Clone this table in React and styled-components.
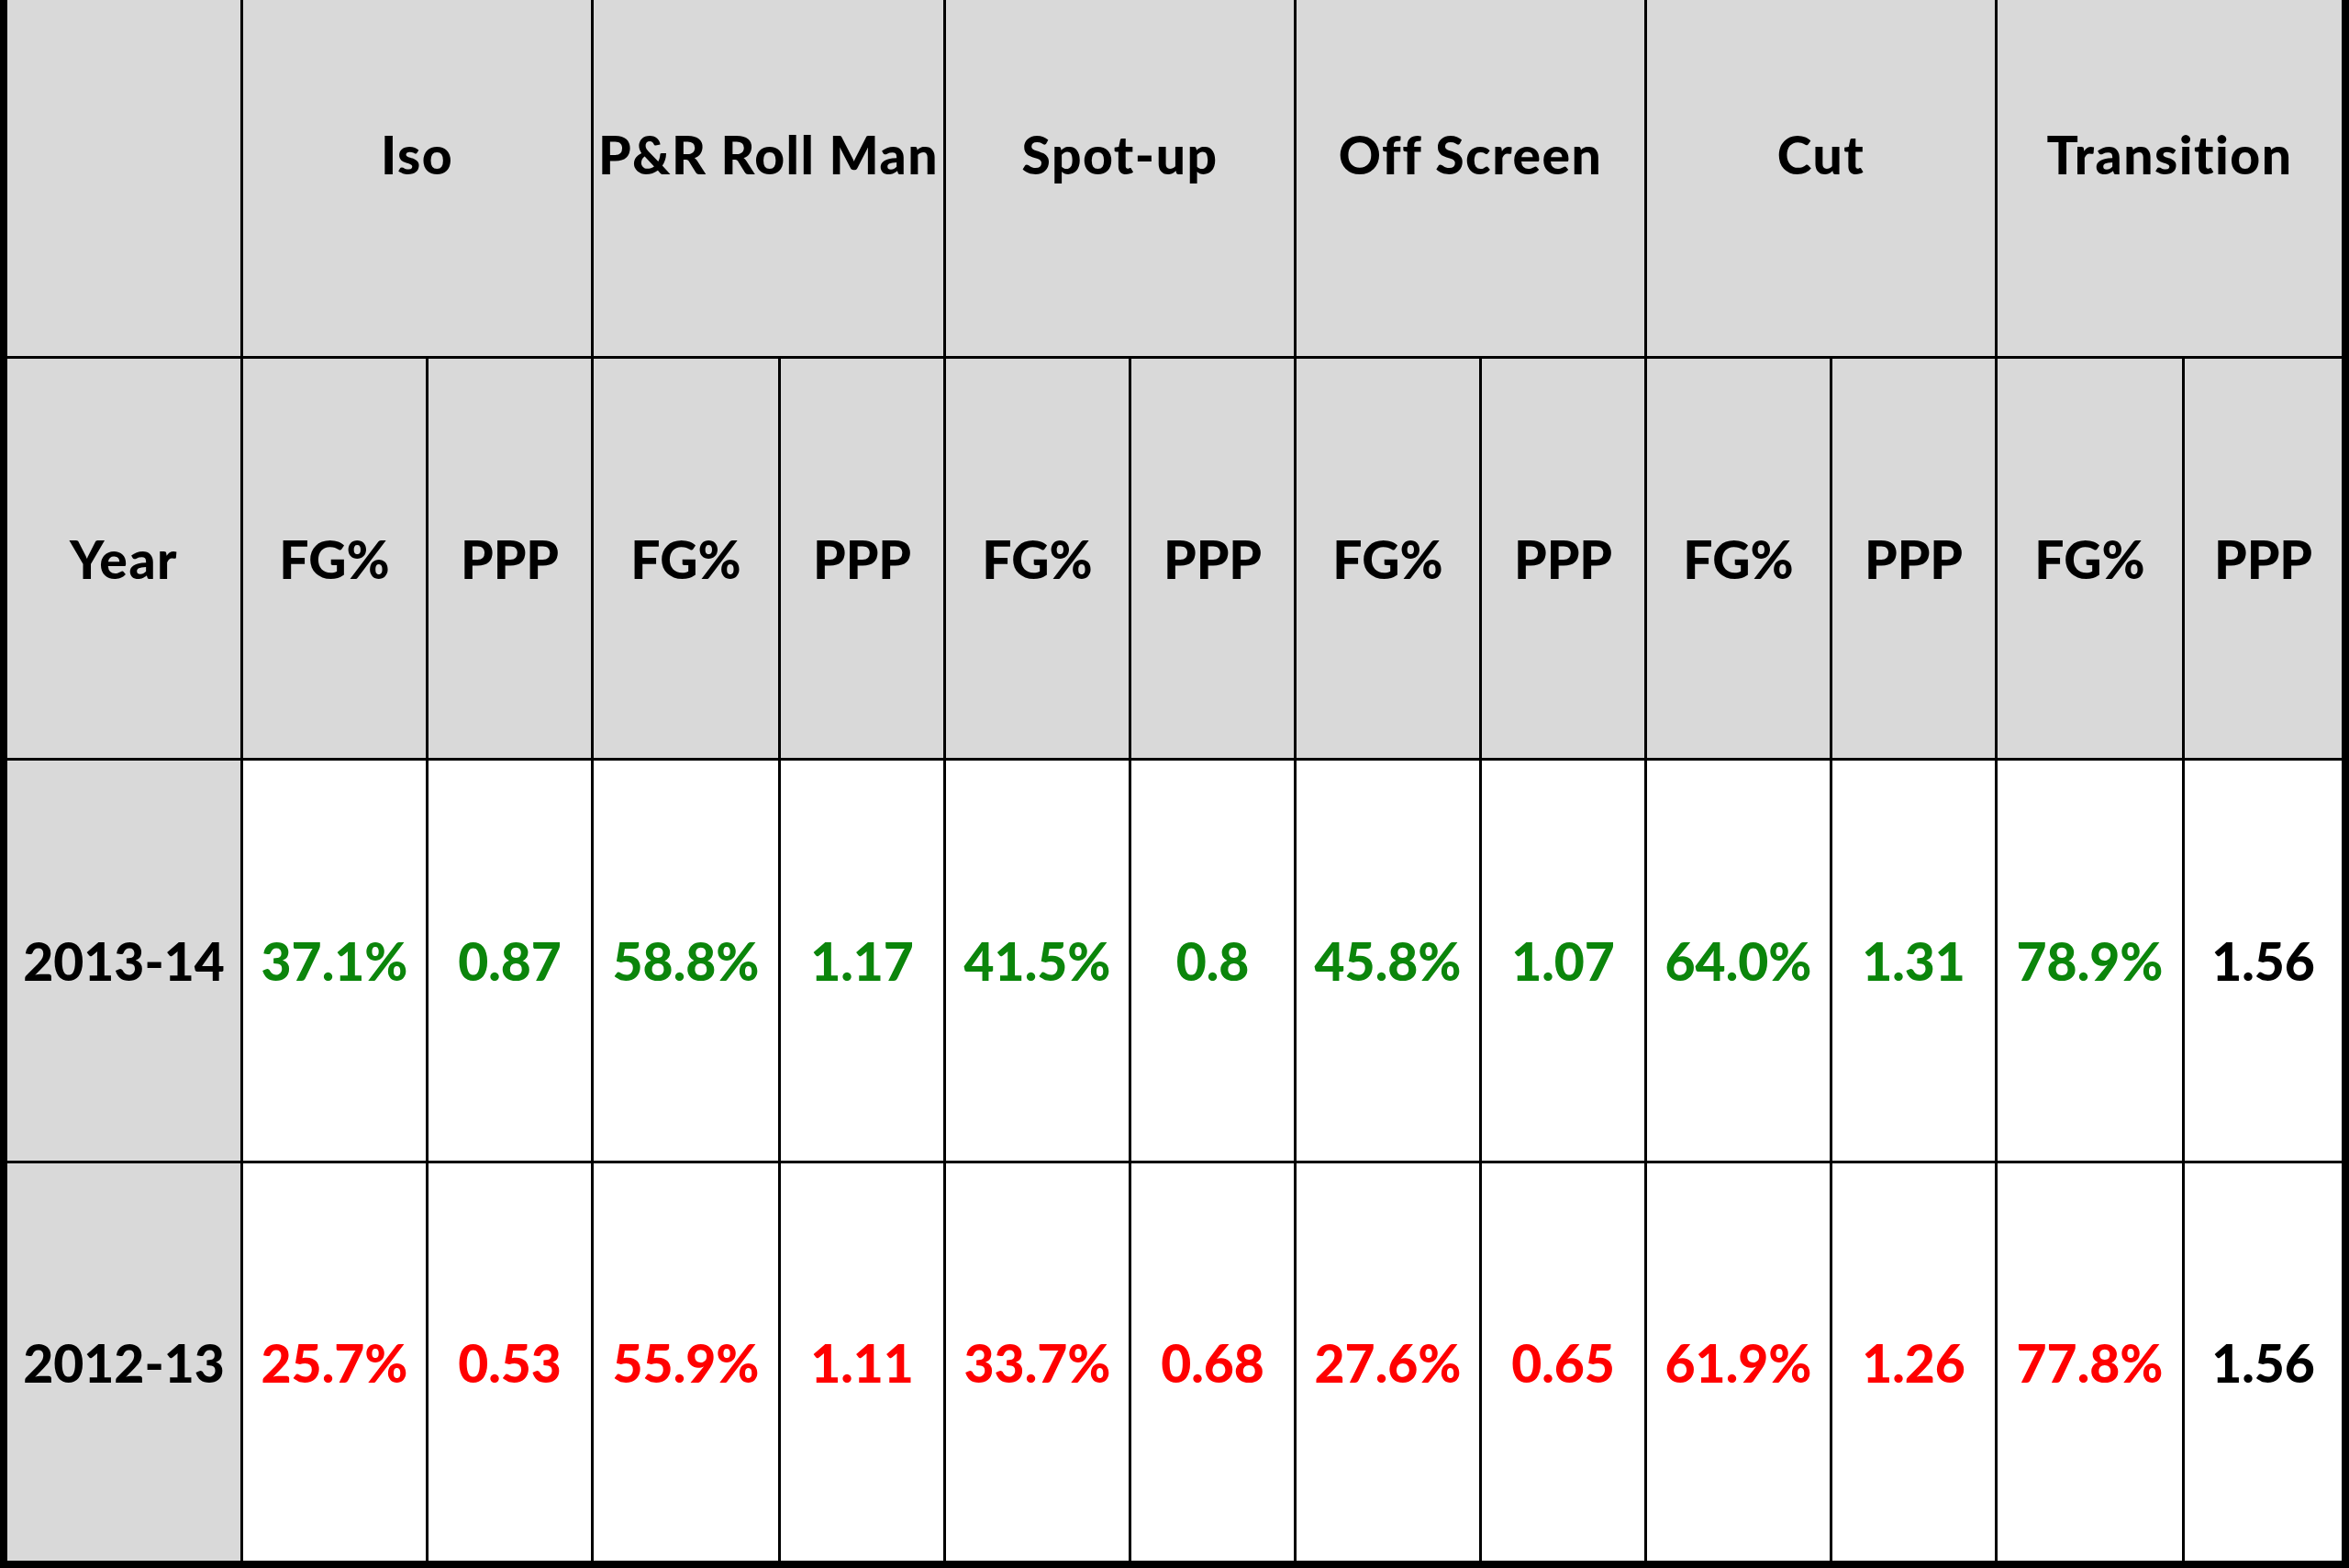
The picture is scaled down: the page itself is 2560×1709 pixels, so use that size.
import React from "react"
import styled, { createGlobalStyle } from "styled-components"

const GlobalStyle = createGlobalStyle`
  html, body {
    margin: 0;
    padding: 0;
    background: #000;
  }
`

const groups = ["Iso", "P&R Roll Man", "Spot-up", "Off Screen", "Cut", "Transition"]

const rows = [
  {
    year: "2013-14",
    tone: "up",
    values: ["37.1%", "0.87", "58.8%", "1.17", "41.5%", "0.8", "45.8%", "1.07", "64.0%", "1.31", "78.9%", "1.56"],
  },
  {
    year: "2012-13",
    tone: "down",
    values: ["25.7%", "0.53", "55.9%", "1.11", "33.7%", "0.68", "27.6%", "0.65", "61.9%", "1.26", "77.8%", "1.56"],
  },
]

const toneColors = {
  up: "#0b850b",
  down: "#ff0000",
  flat: "#000000",
}

// column widths measured off the sheet, last PPP column is a bit narrower
const Table = styled.div`
  display: grid;
  grid-template-columns:
    254px 199px 177px 201px 177px 199px 177px
    199px 177px 199px 177px 201px 171px;
  grid-template-rows: 388px 435px 436px 433px;
  gap: 3px;
  width: 2560px;
  height: 1709px;
  box-sizing: border-box;
  padding: 0 8px 8px 8px;
  background: #000;
  font-family: Lato, "Open Sans", sans-serif;
  font-weight: 900;
  font-size: 57px;
  overflow: hidden;
`

const Cell = styled.div`
  display: flex;
  align-items: center;
  justify-content: center;
  white-space: nowrap;
  background: ${(p) => (p.$shaded ? "#d9d9d9" : "#ffffff")};
  color: ${(p) => toneColors[p.$tone || "flat"]};
  grid-column: ${(p) => (p.$span ? `span ${p.$span}` : "auto")};
  letter-spacing: ${(p) => (p.$wide ? "1.5px" : "0")};
`

// top row is cut off in the shot, so its text sits above the middle
const GroupCell = styled(Cell)`
  padding-bottom: 52px;
`

export default function App() {
  return (
    <>
      <GlobalStyle />
      <Table>
        <GroupCell $shaded />
        {groups.map((g) => (
          <GroupCell key={g} $shaded $span={2} $wide>
            {g}
          </GroupCell>
        ))}

        <Cell $shaded $wide>Year</Cell>
        {groups.map((g) => (
          <React.Fragment key={g}>
            <Cell $shaded>FG%</Cell>
            <Cell $shaded>PPP</Cell>
          </React.Fragment>
        ))}

        {rows.map((row) => (
          <React.Fragment key={row.year}>
            <Cell $shaded>{row.year}</Cell>
            {row.values.map((v, i) => (
              <Cell key={i} $tone={i === row.values.length - 1 ? "flat" : row.tone}>
                {v}
              </Cell>
            ))}
          </React.Fragment>
        ))}
      </Table>
    </>
  )
}
